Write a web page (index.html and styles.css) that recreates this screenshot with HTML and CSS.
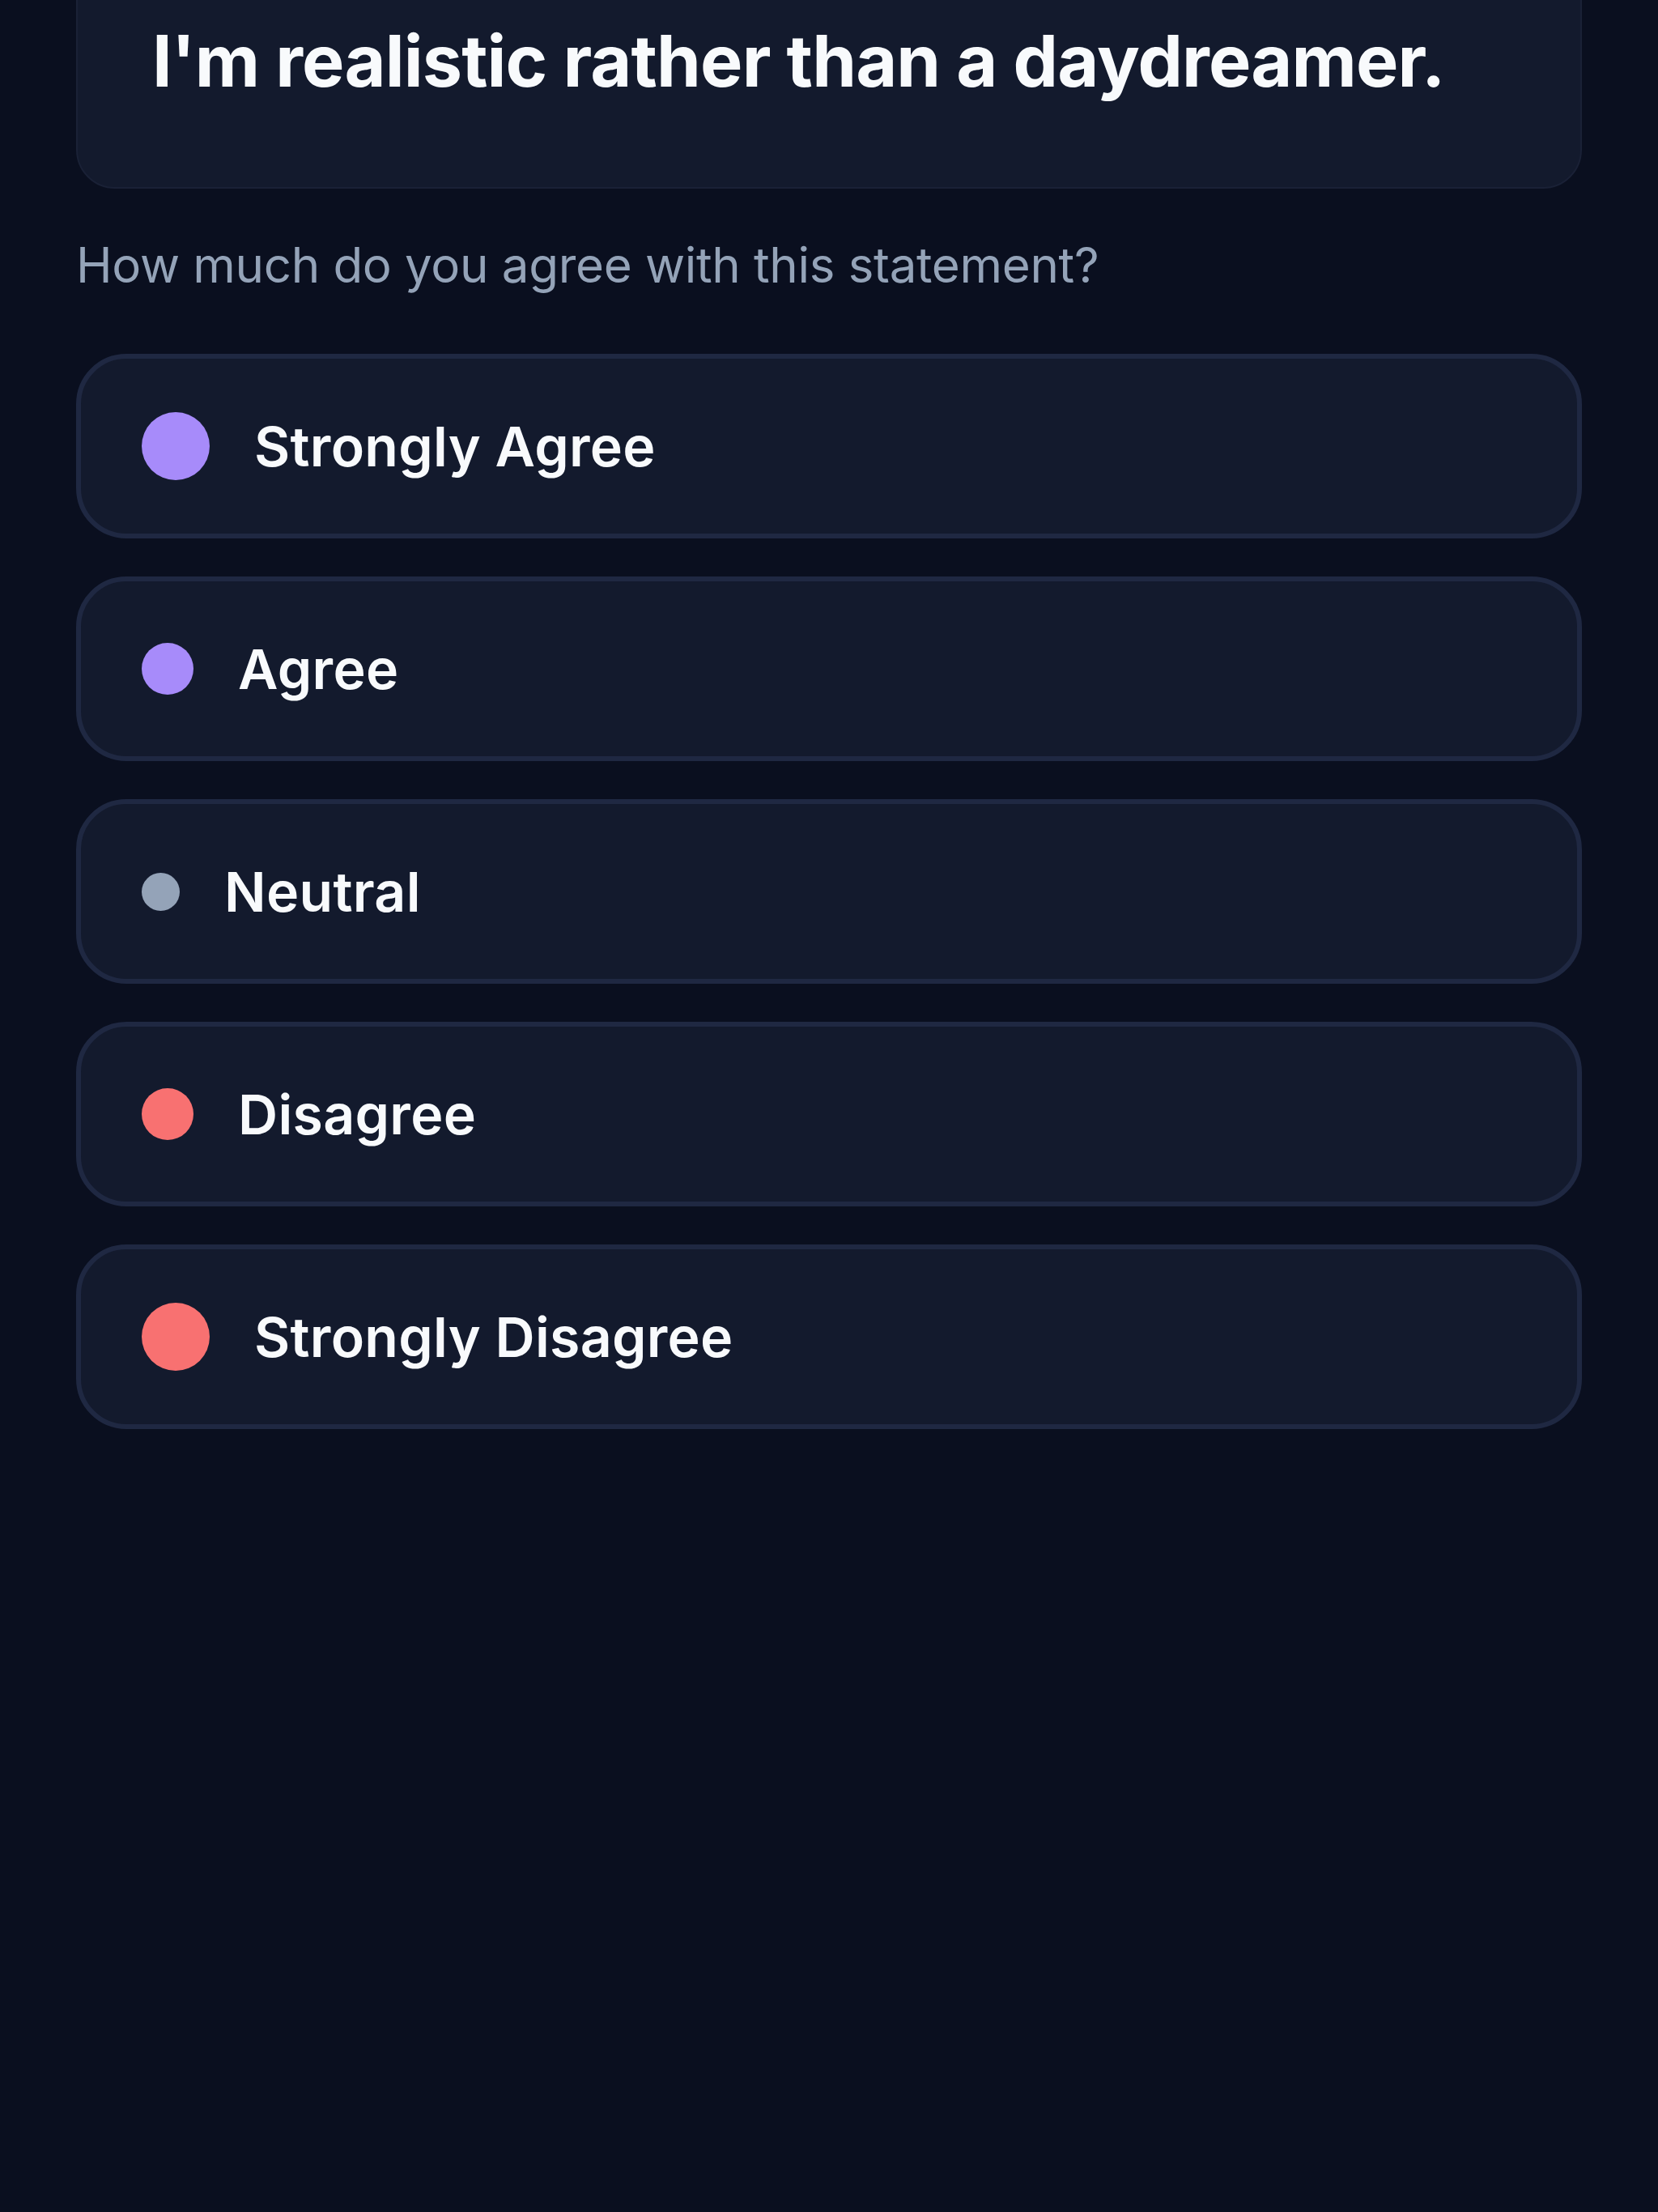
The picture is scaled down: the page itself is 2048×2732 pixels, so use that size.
FILE: index.html
```html
<!DOCTYPE html>
<html lang="en">
<head>
  <meta charset="UTF-8" />
  <meta name="viewport" content="width=device-width, initial-scale=1.0"/>
  <title>Personality Test</title>
  <link rel="stylesheet" href="styles.css">
</head>
<body>
  <main class="screen">
    <section class="statement-card">
      <h1 class="statement">I'm realistic rather than a daydreamer.</h1>
    </section>

    <p class="prompt">How much do you agree with this statement?</p>

    <div class="options">
      <button class="option">
        <span class="dot dot-lg dot-agree"></span>
        <span class="label">Strongly Agree</span>
      </button>
      <button class="option">
        <span class="dot dot-md dot-agree"></span>
        <span class="label">Agree</span>
      </button>
      <button class="option">
        <span class="dot dot-sm dot-neutral"></span>
        <span class="label">Neutral</span>
      </button>
      <button class="option">
        <span class="dot dot-md dot-disagree"></span>
        <span class="label">Disagree</span>
      </button>
      <button class="option">
        <span class="dot dot-lg dot-disagree"></span>
        <span class="label">Strongly Disagree</span>
      </button>
    </div>
  </main>
</body>
</html>
```

FILE: styles.css
```css
body {
  font-family: Inter, 'Noto Sans', sans-serif;
  margin: 0;
  background-color: #0a0f1f;
  color: #f8fafc;
  min-height: 2732px;
  overflow: hidden;
}
.screen {
  padding: 0 94px;
}
.statement-card {
  margin-top: -78px;
  padding: 96px 92px 101px;
  background: #131a2d;
  border: 2px solid #1a2136;
  border-radius: 48px;
}
.statement {
  margin: 0;
  font-size: 88px;
  line-height: 110px;
  font-weight: 700;
  letter-spacing: -0.85px;
  color: #f8fafc;
}
.prompt {
  margin: 52px 0 68px;
  font-size: 60px;
  line-height: 84px;
  letter-spacing: -0.3px;
  color: #94a3b8;
}
.options {
  display: flex;
  flex-direction: column;
  gap: 47px;
}
.option {
  display: flex;
  align-items: center;
  gap: 55px;
  height: 228px;
  box-sizing: border-box;
  padding: 0 75px;
  background: #131a2d;
  border: 6px solid #1f2842;
  border-radius: 62px;
  font-family: inherit;
  text-align: left;
}
.dot {
  flex-shrink: 0;
  border-radius: 50%;
}
.dot-lg { width: 84px; height: 84px; }
.dot-md { width: 64px; height: 64px; }
.dot-sm { width: 47px; height: 47px; }
.dot-agree { background: #a78bfa; }
.dot-neutral { background: #94a3b8; }
.dot-disagree { background: #f87171; }
.label {
  font-size: 68px;
  font-weight: 600;
  letter-spacing: 0.3px;
  color: #f8fafc;
}
```
